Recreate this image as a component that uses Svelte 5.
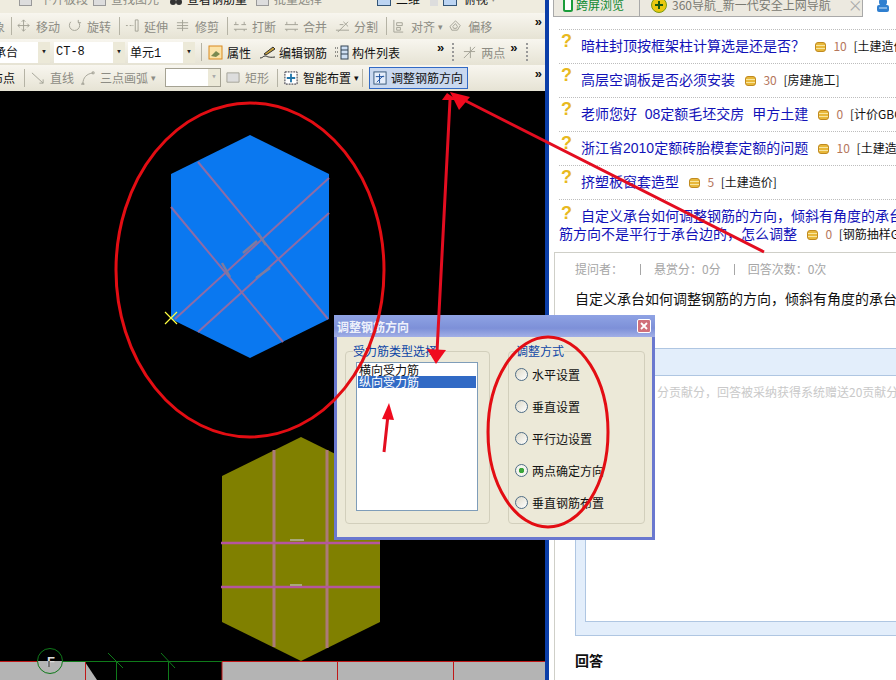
<script lang="ts">
  type Tool = { icon: string; label: string; arrow?: boolean; sep?: boolean };

  const paths: Record<string, string> = {
    move: 'M7 1v12M1 7h12M7 1 5 3M7 1l2 2M7 13l-2-2M7 13l2-2M1 7l2-2M1 7l2 2M13 7l-2-2M13 7l-2 2',
    rotate: 'M3 3a5.5 5.5 0 1 0 8 0M11 1v3h3',
    extend: 'M1 7h2M5 7h2M8 7h1M11 1v12h3V1z',
    trim: 'M7 1v12M1 4h12M1 7h12M1 10h12',
    break: 'M1 6h5M9 6h5M1 11h14M3 3v3M12 3v3M3 11v2M12 11v2',
    merge: 'M1 6h14M1 11h14M3 3v3M12 3v3M3 11v2M12 11v2',
    split: 'M1 12h14M3 14 14 3M9 3l5 5M5 6h4',
    align: 'M2 1v13h10M5 4h6v3H5zM5 9h4v3H5z',
    offset: 'M7 2 12 7 9 12H3L1 8zM7 5l2 3-1 2H5L4 8z',
    line: 'M1 2 13 13M9 13h4V9',
    arc: 'M2 14C2 7 6 3 13 2M1 13h2v2H1zM12 1h2v2h-2z',
    rect: 'M1 2h13v10H1z',
    two: 'M2 14 14 2M2 7h12M9 2v12'
  };

  const row1: Tool[] = [
    { icon: 'move', label: '移动' },
    { icon: 'rotate', label: '旋转', sep: true },
    { icon: 'extend', label: '延伸' },
    { icon: 'trim', label: '修剪', sep: true },
    { icon: 'break', label: '打断' },
    { icon: 'merge', label: '合并' },
    { icon: 'split', label: '分割', sep: true },
    { icon: 'align', label: '对齐', arrow: true },
    { icon: 'offset', label: '偏移' }
  ];

  const questions = [
    { title: '暗柱封顶按框架柱计算选是还是否？', score: 10, tag: '[土建造价]' },
    { title: '高层空调板是否必须安装', score: 30, tag: '[房建施工]' },
    { title: '老师您好  08定额毛坯交房  甲方土建', score: 0, tag: '[计价GBQ4.0]' },
    { title: '浙江省2010定额砖胎模套定额的问题', score: 10, tag: '[土建造价]' },
    { title: '挤塑板窗套造型', score: 5, tag: '[土建造价]' }
  ];

  const radios = [
    { label: '水平设置', on: false },
    { label: '垂直设置', on: false },
    { label: '平行边设置', on: false },
    { label: '两点确定方向', on: true },
    { label: '垂直钢筋布置', on: false }
  ];
</script>

<div class="screen">
  <section class="cad">
    <div class="bar top">
      <span class="chip grey"></span><span class="off t1">下开板段</span>
      <span class="chip grey c-find"></span><span class="off t2">查找图元</span>
      <svg class="binoc" viewBox="0 0 14 14"><circle cx="4" cy="2" r="3" fill="#333" /><circle cx="10" cy="2" r="3" fill="#333" /></svg>
      <span>查看钢筋量</span>
      <span class="chip grey c-batch"></span><span class="off t2">批量选择</span>
      <span class="chip blue c-2d"></span><span class="t3">二维</span>
      <span class="chip grey c-small"></span><span class="chip blue c-top"></span><span class="t4">俯视</span><span class="caret">▾</span>
    </div>

    <div class="bar row-one">
      <span class="stub off"><span>象</span></span>
      <span class="sep"></span>
      {#each row1 as t}
        <span class="tool off" class:has-arrow={t.arrow}>
          <svg class="ico" viewBox="0 0 15 15"><path d={paths[t.icon]} /></svg>
          {t.label}{#if t.arrow}<span class="caret">▾</span>{/if}
        </span>
        {#if t.sep}<span class="sep"></span>{/if}
      {/each}
      <span class="more end">»</span>
    </div>

    <div class="bar row-two">
      <span class="combo c1"><span class="cut">承台</span><i>▾</i></span>
      <span class="combo c2">CT-8<i>▾</i></span>
      <span class="combo c3">单元1<i>▾</i></span>
      <span class="sep"></span>
      <svg class="ico color" viewBox="0 0 15 15"><rect x="1" y="1" width="13" height="13" fill="#fbe3a8" stroke="#d98a20" /><path d="M3 11 8 6l4 3-4 3z" fill="#7a8a50" stroke="none" /></svg>
      <span>属性</span>
      <svg class="ico color pen" viewBox="0 0 18 15"><path d="M1 13c3 0 3-2 5-2s3 2 10 1" stroke="#333" fill="none" /><path d="m5 9 9-7 2 2-9 6z" fill="#c9a23a" stroke="#333" /></svg>
      <span>编辑钢筋</span>
      <svg class="ico color members" viewBox="0 0 15 15"><path d="M1 3h3M1 7h3M1 11h3" stroke="#333" stroke-dasharray="1 1" /><rect x="7" y="1" width="7" height="13" fill="#cfe0f4" stroke="#345" /><path d="M7 5h7M7 9h7" stroke="#345" /></svg>
      <span>构件列表</span>
      <span class="more m2">»</span>
      <span class="grip"></span>
      <span class="tool off"><svg class="ico" viewBox="0 0 15 15"><path d={paths.two} /></svg>两点</span>
      <span class="more m3">»</span>
      <span class="grip"></span>
    </div>

    <div class="bar row-three">
      <span class="lead"><span>布点</span></span>
      <span class="sep"></span>
      <span class="tool off"><svg class="ico" viewBox="0 0 15 15"><path d={paths.line} /></svg>直线</span>
      <span class="tool off arc"><svg class="ico" viewBox="0 0 15 15"><path d={paths.arc} /></svg>三点画弧<span class="caret">▾</span></span>
      <span class="combo c4"><i>▾</i></span>
      <span class="tool off rect"><svg class="ico" viewBox="0 0 15 15"><path d={paths.rect} fill="#ddd" /></svg>矩形</span>
      <span class="sep"></span>
      <svg class="ico color" viewBox="0 0 15 15"><rect x="1" y="1" width="13" height="13" fill="#fff" stroke="#223" stroke-dasharray="2 1" /><path d="M7.5 3v9M3 7.5h9" stroke="#27a" stroke-width="2" /></svg>
      <span>智能布置</span><span class="caret dark">▾</span>
      <span class="sep"></span>
      <span class="adjust">
        <svg class="ico color" viewBox="0 0 15 15"><rect x="1" y="1" width="13" height="13" fill="#e6eefb" stroke="#357" /><path d="M3 6h9M7 3v10M4 12l7-7" stroke="#1b4f9c" fill="none" /></svg>
        调整钢筋方向
      </span>
      <span class="more end">»</span>
    </div>

    <div class="canvas">
      <svg viewBox="0 91 545 589" width="545" height="589">
        <polygon points="250,135 329,174 329,319 250,358 171,319 171,174" fill="#0a78f0" />
        <g class="rebar-blue">
          <path d="M198 162 328 319M171 207 283 342M175 319 329 178M198 332 329 213" />
        </g>
        <g class="blot-blue">
          <path d="M222 263l8 14M258 233l8 12M243 253l14-12M256 278l14-10" />
        </g>
        <path d="M165 312l12 12M177 312l-12 12" stroke="#ffff40" stroke-width="1.2" />

        <polygon points="301,437 380,476 380,622 301,661 222,622 222,476" fill="#808000" />
        <path d="M274 450V647M327 450V648" stroke="#ab7a78" stroke-width="3" />
        <path d="M221 543H380M221 587H380" stroke="#b5559f" stroke-width="2.5" />
        <path d="M290 540h14M290 585h12" stroke="#a9a97a" stroke-width="2" />

        <rect x="0" y="661" width="85" height="19" fill="#b4b4b4" />
        <rect x="222" y="661" width="323" height="19" fill="#b4b4b4" />
        <polygon points="85,662 97,680 85,680" fill="#b4b4b4" />
        <path d="M0 661.5H38M222 661.5H545M85.5 662V680M222 662V680M337.5 662V680M453.5 662V680" stroke="#c01818" />
        <path d="M62 661.5H222M116.5 661V680M168.5 661V680M108 653l15 15M161 653l14 15" stroke="#0f7a1a" />
        <circle cx="50" cy="661" r="12.5" fill="none" stroke="#0f7a1a" />
        <text x="51" y="666" class="axis">F</text>
        <path d="M49 661v6" stroke="#777" stroke-width="2" />
      </svg>
    </div>
  </section>

  <section class="web">
    <nav class="tabs">
      <div class="tab first">
        <svg class="tab-ico" viewBox="0 0 10 16"><rect x="1" y="-3" width="8" height="14" rx="1.5" fill="#fff" stroke="#1b9c3a" stroke-width="2" /></svg>
        跨屏浏览
      </div>
      <div class="tab second">
        <svg class="tab-ico plus" viewBox="0 0 16 16"><circle cx="8" cy="5" r="7.5" fill="#e8c810" stroke="#7a9a10" /><path d="M8 1v8M4 5h8" stroke="#1a5a10" stroke-width="2" /></svg>
        <span>360导航_新一代安全上网导航</span>
        <b>×</b>
      </div>
      <svg class="person" viewBox="0 0 16 16"><circle cx="8" cy="2" r="4" fill="#2f7fd0" /><rect x="2" y="5" width="12" height="7" rx="2" fill="#2f7fd0" /><path d="M4 8h8" stroke="#cfe6fa" /></svg>
    </nav>

    <ul class="questions">
      {#each questions as q}
        <li>
          <span class="mark">?</span><a href="#q">{q.title}</a>
          <svg class="coin" viewBox="0 0 11 10"><rect x="0.5" y="0.5" width="10" height="9" rx="2.5" fill="#e8b83a" stroke="#c08a20" /><path d="M1 3.5h9M1 6.5h9" stroke="#f8e6a0" /></svg>
          <span class="num">{q.score}</span>
          <span class="tag">{q.tag}</span>
        </li>
      {/each}
      <li class="long">
        <span class="mark">?</span><a href="#q">自定义承台如何调整钢筋的方向，倾斜有角度的承台如何调整钢</a><br />
        <a href="#q">筋方向不是平行于承台边的，怎么调整</a>
        <svg class="coin" viewBox="0 0 11 10"><rect x="0.5" y="0.5" width="10" height="9" rx="2.5" fill="#e8b83a" stroke="#c08a20" /><path d="M1 3.5h9M1 6.5h9" stroke="#f8e6a0" /></svg>
        <span class="num">0</span>
        <span class="tag">[钢筋抽样GGJ]</span>
      </li>
    </ul>

    <article class="detail">
      <p class="stats">
        <span>提问者：</span><i></i><span>悬赏分：0分</span><i></i><span>回答次数：0次</span>
      </p>
      <p class="body">自定义承台如何调整钢筋的方向，倾斜有角度的承台如何调整钢筋的方向</p>
      <div class="editor">
        <div class="editor-head"></div>
        <div class="editor-box">
          <p>分贡献分，回答被采纳获得系统赠送20贡献分</p>
        </div>
      </div>
      <h3>回答</h3>
    </article>
  </section>

  <div class="dialog">
    <header>
      <span>调整钢筋方向</span>
      <button type="button" aria-label="关闭">
        <svg viewBox="0 0 12 12"><path d="M3 3l6 6M9 3l-6 6" stroke="#fff" stroke-width="1.8" /></svg>
      </button>
    </header>
    <div class="dialog-body">
      <fieldset class="types">
        <legend>受力筋类型选择</legend>
        <div class="listbox">
          <div>横向受力筋</div>
          <div class="selected">纵向受力筋</div>
        </div>
      </fieldset>
      <fieldset class="modes">
        <legend>调整方式</legend>
        {#each radios as r}
          <label>
            <span class="radio" class:on={r.on}></span>
            {r.label}
          </label>
        {/each}
      </fieldset>
    </div>
  </div>

  <svg class="marks" viewBox="0 0 896 680" width="896" height="680">
    <ellipse cx="250" cy="270" rx="134" ry="167" />
    <ellipse cx="548" cy="432" rx="60" ry="95" />
    <path d="M764 252 460 98M450 100 437 352M384 452 388 415" />
    <polygon points="450,92 470,97 459,110" />
    <polygon points="447,93 457,100 442,100" />
    <polygon points="436,364 427,349 446,350" />
    <polygon points="389,403 382,419 394,420" />
  </svg>
</div>

<style>
  :global(body) {
    margin: 0;
    background: #fff;
  }

  .screen {
    position: relative;
    display: flex;
    width: 896px;
    height: 680px;
    overflow: hidden;
    font-family: "Noto Sans CJK SC", "Liberation Sans", sans-serif;
    font-size: 12px;
    color: #111;
  }

  .cad {
    display: flex;
    flex-direction: column;
    flex: none;
    width: 545px;
  }

  .bar {
    display: flex;
    align-items: center;
    flex: none;
    height: 26px;
    box-sizing: border-box;
    white-space: nowrap;
    overflow: hidden;
    background: linear-gradient(#f8f6ef, #e6e3d4);
  }

  .top {
    height: 13px;
    align-items: flex-start;
    padding-left: 19px;
    line-height: 12px;
    background: #efecdf;
  }

  .top > span:not(.chip) {
    margin-top: -7px;
  }

  .binoc {
    flex: none;
    width: 14px;
    height: 14px;
    margin-left: 10px;
    margin-right: 4px;
  }

  .chip {
    flex: none;
    box-sizing: border-box;
    width: 13px;
    height: 6px;
    border: 1px solid #999;
    border-top: 0;
    background: #ddd;
  }

  .chip.blue {
    border-color: #357;
    background: #bcd4f2;
  }

  .t1 {
    width: 48px;
    margin-left: 8px;
  }

  .t2 {
    margin-left: 5px;
  }

  .c-find {
    margin-left: 5px;
  }

  .c-batch {
    margin-left: 9px;
  }

  .c-2d {
    margin-left: 55px;
    width: 14px;
  }

  .t3 {
    margin-left: 5px;
  }

  .c-small {
    width: 8px;
    margin-left: 10px;
    border: 0;
  }

  .c-top {
    margin-left: 5px;
    width: 14px;
  }

  .t4 {
    margin-left: 7px;
  }

  .stub {
    flex: none;
    width: 11px;
    overflow: hidden;
  }

  .stub span {
    display: block;
    margin-left: -7px;
  }

  .row-one .tool {
    margin-right: 8px;
  }

  .row-one .has-arrow {
    margin-right: 6px;
  }

  .row-one .sep {
    margin-right: 5px;
  }

  .row-two > .ico {
    margin: 0 4px 0 6px;
    width: 15px;
    height: 15px;
  }

  .row-two > .pen {
    width: 18px;
    margin-left: 8px;
    margin-right: 2px;
  }

  .row-two > .members {
    margin-left: 7px;
    margin-right: 3px;
  }

  .row-three {
    padding-bottom: 1px;
  }

  .lead {
    flex: none;
    width: 24px;
    overflow: hidden;
  }

  .lead span {
    display: block;
    margin-left: -9px;
  }

  .row-three .sep {
    margin-right: 6px;
  }

  .row-three .arc {
    margin-left: 7px;
  }

  .row-three .rect {
    margin-right: 8px;
  }

  .row-three > .ico {
    margin-right: 5px;
    width: 14px;
    height: 14px;
  }

  .sep {
    flex: none;
    width: 1px;
    height: 18px;
    background: #b5b3a5;
  }

  .tool {
    display: inline-flex;
    align-items: center;
    flex: none;
  }

  .ico {
    flex: none;
    width: 14px;
    height: 14px;
    margin-right: 5px;
    fill: none;
    stroke: #a3a196;
  }

  .off {
    color: #8d8c84;
  }

  .caret {
    margin-left: 3px;
    font-size: 9px;
    color: #8d8c84;
  }

  .caret.dark {
    color: #111;
    margin-right: 3px;
  }

  .more {
    flex: none;
    font-family: "Liberation Sans", sans-serif;
    font-size: 13px;
    font-weight: 700;
    line-height: 10px;
    align-self: flex-start;
    margin-top: 4px;
  }

  .more.end {
    margin-left: auto;
    margin-right: 3px;
  }

  .m2 {
    margin-left: 37px;
  }

  .m3 {
    margin-left: 5px;
  }

  .grip {
    flex: none;
    width: 2px;
    height: 18px;
    margin: 0 8px;
    background: repeating-linear-gradient(#999 0 2px, transparent 2px 4px);
  }

  .combo {
    display: flex;
    align-items: center;
    justify-content: space-between;
    flex: none;
    box-sizing: border-box;
    height: 21px;
    padding-left: 2px;
    background: #fff;
    font-family: "Liberation Mono", "Noto Sans CJK SC", monospace;
  }

  .combo i {
    width: 12px;
    align-self: stretch;
    line-height: 21px;
    text-align: center;
    font-size: 9px;
    font-style: normal;
    color: #222;
    background: #ece9d8;
  }

  .c1 {
    width: 50px;
    padding-left: 0;
  }

  .cut {
    margin-left: -6px;
  }

  .c2 {
    width: 71px;
    margin-left: 4px;
  }

  .c3 {
    width: 67px;
    margin-left: 3px;
    margin-right: 6px;
  }

  .c4 {
    width: 56px;
    height: 19px;
    margin: 0 5px 0 9px;
    border: 1px solid #a5a293;
  }

  .c4 i {
    margin-left: auto;
    color: #aaa;
    line-height: 17px;
  }

  .adjust {
    display: flex;
    align-items: center;
    flex: none;
    box-sizing: border-box;
    width: 99px;
    height: 22px;
    padding-left: 3px;
    border: 1px solid #316ac5;
    background: #c9d8ef;
  }

  .adjust .ico {
    margin-right: 4px;
  }

  .canvas {
    flex: 1;
    background: #000;
  }

  .canvas svg {
    display: block;
  }

  .rebar-blue {
    fill: none;
    stroke: #8d6ca6;
    stroke-width: 2;
  }

  .blot-blue {
    fill: none;
    stroke: #7c7ca0;
    stroke-width: 2.5;
  }

  .axis {
    fill: #dcdcdc;
    font-family: "Liberation Sans", sans-serif;
    font-size: 13px;
    font-weight: 700;
    text-anchor: middle;
  }

  .web {
    flex: 1;
    min-width: 0;
    border-left: 4px solid #0b3ea8;
    background: #fff;
    overflow: hidden;
  }

  .tabs {
    display: flex;
    box-sizing: border-box;
    height: 17px;
    padding-left: 4px;
    color: #7a7a72;
    font-size: 12px;
    line-height: 10px;
    white-space: nowrap;
    overflow: hidden;
  }

  .tab {
    display: flex;
    align-items: flex-start;
    box-sizing: border-box;
    height: 17px;
    border-right: 1px solid #a9a9a9;
    border-bottom: 1px solid #a9a9a9;
    background: #ece9e0;
  }

  .first {
    width: 87px;
    padding-left: 9px;
    border-left: 1px solid #a9a9a9;
    color: #0e8a30;
  }

  .second {
    width: 223px;
    padding-left: 11px;
  }

  .tab-ico {
    flex: none;
    width: 10px;
    height: 16px;
    margin-right: 3px;
  }

  .tab-ico.plus {
    width: 16px;
    margin-right: 5px;
  }

  .second b {
    margin-left: 17px;
    font-size: 15px;
    font-weight: 400;
    color: #aaa;
  }

  .person {
    flex: none;
    width: 16px;
    height: 16px;
    margin-left: 12px;
  }

  .questions {
    margin: 12px 0 0;
    padding: 0 0 0 10px;
    list-style: none;
    white-space: nowrap;
  }

  .questions li {
    box-sizing: border-box;
    height: 34px;
    border-top: 1px dotted #bdbdbd;
    font-size: 12px;
    line-height: 32px;
  }

  .questions li.long {
    height: 53px;
    padding-top: 7px;
    line-height: 18px;
  }

  .mark {
    display: inline-block;
    box-sizing: border-box;
    width: 22px;
    padding-left: 2px;
    font-family: "Liberation Sans", sans-serif;
    font-size: 18px;
    font-weight: 700;
    line-height: 18px;
    vertical-align: 4px;
    color: #e8b91f;
  }

  .long .mark {
    line-height: 10px;
    vertical-align: 2px;
  }

  a {
    font-family: "Liberation Sans", "Noto Sans CJK SC", sans-serif;
    font-size: 14px;
    color: #1212b8;
    text-decoration: none;
    white-space: pre;
  }

  .coin {
    width: 11px;
    height: 10px;
    margin: 0 3px 0 7px;
    vertical-align: -1px;
  }

  .num {
    margin: 0 4px 0 2px;
    color: #b5765c;
  }

  .detail {
    box-sizing: border-box;
    height: 430px;
    margin: 0 0 0 5px;
    border: 1px solid #cfcfc8;
    border-right: 0;
    border-bottom: 0;
    padding-left: 20px;
    white-space: nowrap;
  }

  .stats {
    display: flex;
    align-items: center;
    margin: 7px 0 0;
    color: #a6a6a6;
    line-height: 18px;
  }

  .stats i {
    width: 1px;
    height: 11px;
    margin: 0 13px;
    background: #a6a6a6;
  }

  .stats span:first-child {
    width: 48px;
    margin-right: 4px;
  }

  .body {
    margin: 10px 0 0;
    font-size: 14px;
    line-height: 20px;
  }

  .editor {
    box-sizing: border-box;
    height: 288px;
    margin-top: 40px;
    padding: 0 0 13px 9px;
    border: 1px solid #afc6e2;
    border-right: 0;
    background: #e3eefb;
  }

  .editor-head {
    height: 26px;
    margin-left: -9px;
    border-bottom: 1px solid #afc6e2;
  }

  .editor-box {
    box-sizing: border-box;
    height: 246px;
    border: 1px solid #afc6e2;
    border-top: 0;
    border-right: 0;
    background: #fff;
  }

  .editor-box p {
    margin: 0;
    padding: 7px 0 0 71px;
    font-size: 12px;
    line-height: 18px;
    color: #c9c9c9;
  }

  h3 {
    margin: 14px 0 0;
    font-size: 14px;
    line-height: 20px;
    font-weight: 700;
  }

  .dialog {
    position: absolute;
    left: 334px;
    top: 315px;
    box-sizing: border-box;
    width: 321px;
    height: 225px;
    border: 3px solid #6a78cf;
    border-top: 0;
    background: #ece9d8;
  }

  .dialog header {
    display: flex;
    align-items: center;
    justify-content: space-between;
    box-sizing: border-box;
    height: 22px;
    margin: 0 -3px;
    padding: 0 4px 0 3px;
    background: linear-gradient(#8fa3e4, #7d90d8 60%, #a2afe6);
    color: #eef1fb;
    font-weight: 700;
  }

  .dialog button {
    width: 14px;
    height: 14px;
    padding: 0;
    border: 1px solid #fff;
    border-radius: 2px;
    background: #d0707a;
  }

  .dialog button svg {
    display: block;
    width: 12px;
    height: 12px;
  }

  .dialog-body {
    display: flex;
    gap: 18px;
    padding: 7px 0 0 8px;
  }

  fieldset {
    box-sizing: border-box;
    height: 180px;
    margin: 0;
    border: 1px solid #d2cfbc;
    border-radius: 4px;
    padding: 0;
  }

  legend {
    padding: 0;
    color: #0d45a5;
    line-height: 14px;
  }

  .types {
    width: 145px;
    padding: 4px 0 0 10px;
  }

  .types legend {
    margin-left: -3px;
  }

  .listbox {
    box-sizing: border-box;
    width: 122px;
    height: 149px;
    padding: 1px 1px 0 1px;
    border: 1px solid #7f9db9;
    background: #fff;
    line-height: 12px;
  }

  .listbox div {
    height: 12px;
    padding-left: 1px;
  }

  .selected {
    background: #316ac5;
    color: #fff;
  }

  .modes {
    width: 137px;
    padding: 0 0 0 6px;
  }

  .modes legend {
    margin-left: 1px;
  }

  .modes label {
    display: flex;
    align-items: center;
    height: 32px;
    gap: 4px;
  }

  .radio {
    flex: none;
    box-sizing: border-box;
    width: 13px;
    height: 13px;
    border: 1px solid #4f6d86;
    border-radius: 50%;
    background: linear-gradient(135deg, #ddd9c8, #fff);
  }

  .radio.on {
    background: radial-gradient(circle, #3aa53a 0 2.5px, #f4f4ee 3px);
  }

  .marks {
    position: absolute;
    left: 0;
    top: 0;
    pointer-events: none;
  }

  .marks ellipse {
    fill: none;
    stroke: #e30d13;
    stroke-width: 3;
  }

  .marks path {
    fill: none;
    stroke: #e30d20;
    stroke-width: 3;
  }

  .marks polygon {
    fill: #f00a1e;
  }
</style>
